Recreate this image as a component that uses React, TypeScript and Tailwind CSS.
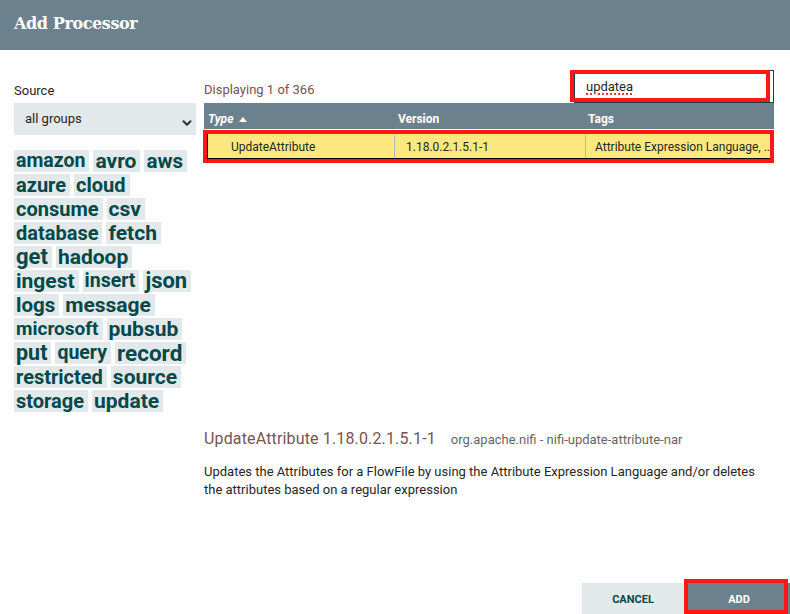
import React from 'react';
import { ChevronDown } from 'lucide-react';

type Tag = { label: string; size: string };

// tag cloud rows, sizes picked per tag like the weighted cloud
const tagRows: Tag[][] = [
  [
    { label: 'amazon', size: 'text-[19.5px]' },
    { label: 'avro', size: 'text-[21px]' },
    { label: 'aws', size: 'text-[20.5px]' },
  ],
  [
    { label: 'azure', size: 'text-[20px]' },
    { label: 'cloud', size: 'text-[20px]' },
  ],
  [
    { label: 'consume', size: 'text-[20px]' },
    { label: 'csv', size: 'text-[21px]' },
  ],
  [
    { label: 'database', size: 'text-[20px]' },
    { label: 'fetch', size: 'text-[21px]' },
  ],
  [
    { label: 'get', size: 'text-[22px]' },
    { label: 'hadoop', size: 'text-[21px]' },
  ],
  [
    { label: 'ingest', size: 'text-[21px]' },
    { label: 'insert', size: 'text-[19.5px]' },
    { label: 'json', size: 'text-[22px]' },
  ],
  [
    { label: 'logs', size: 'text-[20.5px]' },
    { label: 'message', size: 'text-[21px]' },
  ],
  [
    { label: 'microsoft', size: 'text-[19px]' },
    { label: 'pubsub', size: 'text-[21px]' },
  ],
  [
    { label: 'put', size: 'text-[21.5px]' },
    { label: 'query', size: 'text-[19.5px]' },
    { label: 'record', size: 'text-[22.5px]' },
  ],
  [
    { label: 'restricted', size: 'text-[20px]' },
    { label: 'source', size: 'text-[21px]' },
  ],
  [
    { label: 'storage', size: 'text-[20px]' },
    { label: 'update', size: 'text-[21px]' },
  ],
];

export default function App() {
  return (
    <div className="h-[614px] w-[790px] overflow-hidden bg-white flex flex-col font-['Roboto',sans-serif] text-[#262626]">
      {/* Header */}
      <div className="h-[50px] shrink-0 bg-[#6b828e] flex items-center px-[14px] pb-[2px]">
        <h1 className="text-white font-bold text-[16px] font-['DejaVu_Serif',serif] tracking-[-0.4px]">
          Add Processor
        </h1>
      </div>

      <div className="flex flex-1 min-h-0">
        {/* Left: source + tags */}
        <aside className="w-[182px] ml-[14px] pt-[33px] shrink-0">
          <div className="text-[13px] leading-[16px]">Source</div>
          <div className="mt-[4px] h-[32px] bg-[#e3e8eb] flex items-center justify-between pl-[11px] pr-[2px]">
            <span className="text-[13px]">all groups</span>
            <ChevronDown className="w-[14px] h-[14px] text-[#1d3b3b] mt-[8px]" strokeWidth={3.5} />
          </div>
          <div className="mt-[15px] flex flex-col gap-[2px]">
            {tagRows.map((row, i) => (
              <div key={i} className="flex gap-[4px] whitespace-nowrap">
                {row.map(tag => (
                  <span
                    key={tag.label}
                    className={`${tag.size} h-[22px] leading-[22px] pl-[2px] pr-[4px] bg-[#e3e8eb] text-[#004849] font-bold`}
                  >
                    {tag.label}
                  </span>
                ))}
              </div>
            ))}
          </div>
        </aside>

        {/* Right: table + detail */}
        <section className="ml-[8px] w-[570px] pt-[19px]">
          <div className="h-[34px] flex justify-between items-start">
            <span className="mt-[13px] text-[13px] leading-[16px] text-[#775351]">Displaying 1 of 366</span>
            <div className="relative mt-[1px] w-[200px] h-[33px] border border-[#1e3f3f] flex items-center pl-[11px]">
              <span className="text-[13px] underline decoration-dotted decoration-[#e53935] decoration-2 underline-offset-[3px]">
                updatea
              </span>
              <div className="absolute -left-[5px] right-[3px] -top-[1px] bottom-0 border-[4px] border-[#ff1616]" />
            </div>
          </div>

          <div className="h-[326px]">
            <div className="h-[26px] pt-[5px] bg-[#6b828e] flex items-center text-white text-[12px] font-bold">
              <div className="w-[190px] pl-[4px] flex items-center gap-[6px]">
                <span className="italic">Type</span>
                <svg width="8" height="5" viewBox="0 0 8 5" className="mt-[1px]">
                  <path d="M0 5 L4 0 L8 5 Z" fill="white" />
                </svg>
              </div>
              <div className="w-[191px] pl-[4px]">Version</div>
              <div className="flex-1 pl-[3px]">Tags</div>
            </div>

            <div className="relative mt-[4px] mx-[3px] h-[26px] border border-black bg-[#fde880] flex items-stretch text-[12px] pt-[1px]">
              <div className="w-[186px] pl-[23px] flex items-center">UpdateAttribute</div>
              <div className="w-[191px] border-l border-[#b9b9b9] pl-[11px] flex items-center">1.18.0.2.1.5.1-1</div>
              <div className="flex-1 min-w-0 border-l border-[#b9b9b9] pl-[9px] flex items-center whitespace-nowrap overflow-hidden">
                Attribute Expression Language, ...
              </div>
              <div className="absolute -left-[5px] -right-[4px] -top-[4px] -bottom-[5px] border-[4px] border-[#ff1616]" />
            </div>
          </div>

          <div className="flex items-baseline leading-[20px]">
            <span className="text-[16px] tracking-[0.15px] text-[#775351]">UpdateAttribute 1.18.0.2.1.5.1-1</span>
            <span className="ml-[15px] text-[13px] text-[#666666]">org.apache.nifi - nifi-update-attribute-nar</span>
          </div>
          <p className="mt-[13px] text-[13px] leading-[18px]">
            Updates the Attributes for a FlowFile by using the Attribute Expression Language and/or deletes the attributes based on a regular expression
          </p>
        </section>
      </div>

      {/* Footer buttons */}
      <div className="h-[35px] shrink-0 flex justify-end items-start pt-[4px]">
        <button className="w-[102px] h-[31px] pt-[3px] bg-[#e3e8eb] text-[#004849] text-[11px] font-bold uppercase">
          Cancel
        </button>
        <button className="relative ml-[4px] w-[102px] h-[31px] pt-[3px] bg-[#6b828e] text-white text-[11px] font-bold uppercase">
          Add
          <span className="absolute -left-[4px] right-[2px] -top-[4px] bottom-0 border-[4px] border-[#ff1616]" />
        </button>
      </div>
    </div>
  );
}
